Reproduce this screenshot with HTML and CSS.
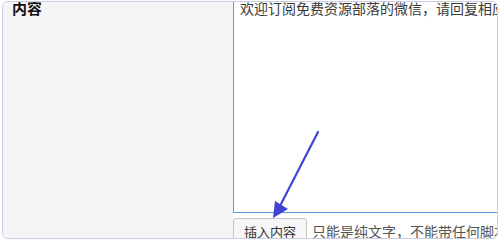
FILE: index.html
```html
<!DOCTYPE html>
<html lang="zh-CN">
<head>
    <meta charset="UTF-8">
    <title>内容</title>
    <link rel="stylesheet" href="styles.css">
</head>
<body>
    <div class="frame">
        <div class="label-cell">内容</div>
        <div class="field-cell">
            <textarea class="content-box" wrap="off">欢迎订阅免费资源部落的微信，请回复相应的关键字</textarea>
            <div class="actions">
                <button class="insert-btn">插入内容</button>
                <span class="hint">只能是纯文字，不能带任何脚本</span>
            </div>
        </div>
    </div>

    <svg class="arrow" width="500" height="240" viewBox="0 0 500 240">
        <line x1="318" y1="132" x2="281" y2="204" stroke="#3f44d4" stroke-width="2.2" stroke-linecap="round"/>
        <polygon points="273,218 275,201 288,209" fill="#3f44d4"/>
    </svg>
</body>
</html>
```

FILE: styles.css
```css
body {
    margin: 0;
    background: #fff;
    font-family: "Noto Sans CJK SC", "Noto Sans", sans-serif;
    position: relative;
}
.frame {
    margin: 1px 2px 0 2px;
    height: 236px;
    border: 1px solid #cbcbe3;
    border-radius: 6px;
    overflow: hidden;
    display: flex;
}
.label-cell {
    width: 221px;
    padding: 0 0 0 9px;
    background: #f5f5f5;
    font-size: 15px;
    font-weight: bold;
    color: #111;
    line-height: 16px;
    margin-top: -2px;
}
.field-cell {
    flex: 1;
    display: flex;
    flex-direction: column;
    min-width: 0;
}
.content-box {
    flex-shrink: 0;
    box-sizing: border-box;
    width: 300px;
    height: 215px;
    margin: -4px 0 0 0;
    padding: 0 6px;
    border: 1px solid #5b9dd9;
    border-right: none;
    font-family: inherit;
    font-size: 14px;
    line-height: 18px;
    color: #3a3a3a;
    resize: none;
    overflow: hidden;
    outline: none;
}
.actions {
    flex-shrink: 0;
    display: flex;
    align-items: flex-start;
    margin-top: 5px;
    white-space: nowrap;
}
.insert-btn {
    font-family: inherit;
    font-size: 13px;
    color: #333;
    padding: 4px 10px;
    border: 1px solid #c6c6c6;
    border-radius: 3px;
    background: #f7f7f7;
    line-height: 18px;
}
.hint {
    margin-left: 5px;
    padding-top: 4px;
    font-size: 14px;
    line-height: 18px;
    color: #555;
}
.arrow {
    position: absolute;
    top: 0;
    left: 0;
    pointer-events: none;
}
```
